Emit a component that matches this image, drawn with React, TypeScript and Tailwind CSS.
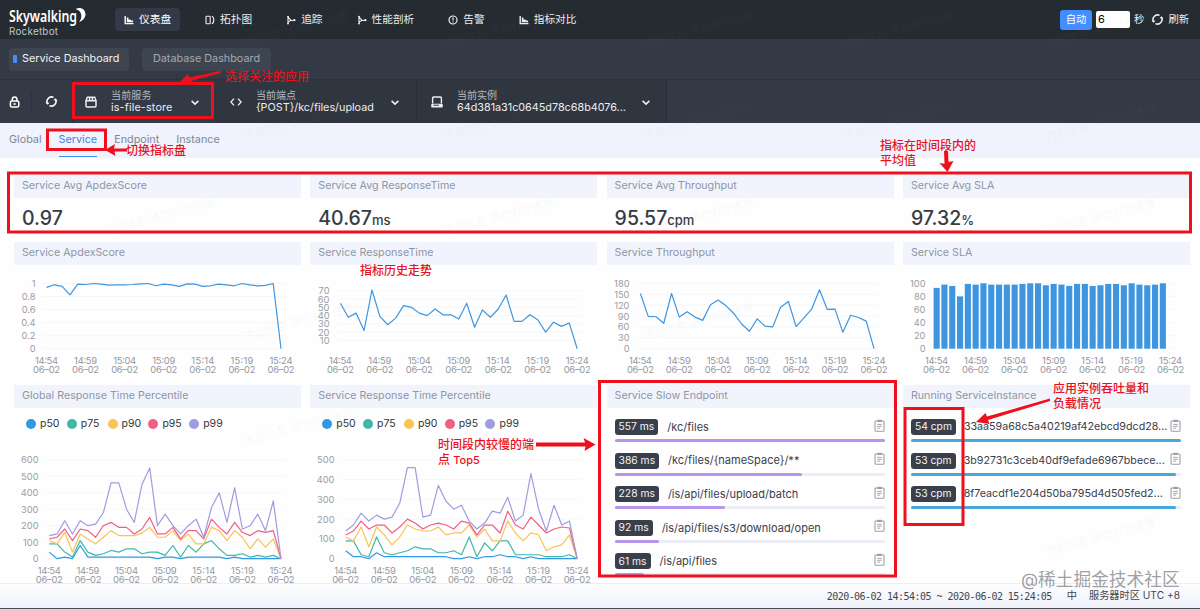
import type { ReactNode } from "react"

type IconProps = { className?: string }

const ChartIcon = ({ className = "h-2.5 w-2.5" }: IconProps) => (
  <svg className={className} viewBox="0 0 10 10" fill="currentColor">
    <path d="M0.5 1h1.4v7H9.5v1.3h-9z" />
    <path d="M2.8 2.6h1.6v1.9h1.8l1 1h1.9v1.8H2.8z" />
  </svg>
)

const TopologyIcon = () => (
  <svg className="h-2.5 w-2.5" viewBox="0 0 10 10" fill="none" stroke="currentColor" strokeWidth="1.1">
    <rect x="1" y="1.2" width="4.2" height="7.6" rx="0.8" />
    <path d="M6.8 1.2c1.3.4 2 1.800 2 3.800s-.7 3.400-2 3.800" />
  </svg>
)

const TraceIcon = () => (
  <svg className="h-2.5 w-2.5" viewBox="0 0 10 10" fill="none" stroke="currentColor" strokeWidth="1.1">
    <path d="M2 1.6v7M2 7.6C2.4 5.6 5 5.3 8.4 5.2M2.2 2.4 5 5.1" />
    <circle cx="8.4" cy="5.2" r="0.6" fill="currentColor" />
    <circle cx="2" cy="1.6" r="0.4" fill="currentColor" />
    <circle cx="2" cy="8.6" r="0.4" fill="currentColor" />
  </svg>
)

const AlarmIcon = () => (
  <svg className="h-2.5 w-2.5" viewBox="0 0 10 10" fill="none" stroke="currentColor" strokeWidth="1.2">
    <circle cx="5" cy="5" r="4" />
    <path d="M5 2.6v3M5 6.4v1" />
  </svg>
)

const ReloadIcon = ({ className = "h-3 w-3" }: IconProps) => (
  <svg className={className} viewBox="0 0 14 14" fill="none" stroke="currentColor" strokeWidth="1.7">
    <path d="M2.9 9.6A4.9 4.9 0 0 1 9.2 2.6M11.1 4.4A4.9 4.9 0 0 1 4.8 11.4" />
    <path d="M.6 8.2 2.8 10.6 4.9 8.3zM13.4 5.8 11.2 3.4 9.1 5.7z" fill="currentColor" stroke="none" />
  </svg>
)

const LockIcon = () => (
  <svg className="h-3 w-3" viewBox="0 0 12 12" fill="none" stroke="currentColor" strokeWidth="1.5">
    <rect x="1.4" y="5" width="8.4" height="6" rx="1.6" />
    <path d="M3.3 5V3.4a2.3 2.3 0 0 1 4.6 0V5M4.400 8h2.400" />
  </svg>
)

const PackageIcon = () => (
  <svg className="h-3 w-3" viewBox="0 0 12 12" fill="none" stroke="currentColor" strokeWidth="1.5">
    <path d="M1 4.8h10v5.1a1 1 0 0 1-1 1H2a1 1 0 0 1-1-1zM1 4.8 2.3 1.2h7.4L11 4.8M4.6 1.2v3.4M7.4 1.2v3.4" />
  </svg>
)

const CodeIcon = () => (
  <svg className="h-3 w-3" viewBox="0 0 12 12" fill="none" stroke="currentColor" strokeWidth="1.3">
    <path d="M4 2.6.9 6 4 9.4M8 2.6 11.1 6 8 9.4" />
  </svg>
)

const DiskIcon = () => (
  <svg className="h-3 w-3" viewBox="0 0 12 12" fill="none" stroke="currentColor" strokeWidth="1.4">
    <path d="M1.6 7.6V2a1 1 0 0 1 1-1h6.8a1 1 0 0 1 1 1v5.600" />
    <rect x="0.2" y="7.8" width="11.6" height="3.7" rx="1.2" fill="currentColor" stroke="none" />
    <path d="M2.500 9.200h5.500" stroke="#303640" strokeWidth="1" />
  </svg>
)

const ChevronIcon = () => (
  <svg className="h-2.5 w-2.5 shrink-0" viewBox="0 0 10 10" fill="none" stroke="currentColor" strokeWidth="1.6">
    <path d="M1.6 3.900 5 7.100 8.400 3.900" />
  </svg>
)

const ClipboardIcon = () => (
  <svg className="h-[13px] w-[11px] shrink-0 text-[#9a9fa8]" viewBox="0 0 11 13" fill="none" stroke="currentColor">
    <rect x="1" y="2" width="9" height="10.2" rx="0.8" strokeWidth="1.1" />
    <path d="M3.2 1.9h4.6" strokeWidth="2.2" />
    <path d="M3.2 5.4h4.6M3.2 7.3h4.6M3.2 9.2h2.8" strokeWidth="0.9" />
  </svg>
)

const Logo = () => (
  <svg className="h-9 w-[84px]" viewBox="0 0 84 36">
    <text
      x="0"
      y="20"
      fontFamily="'Noto Sans'"
      fontWeight="600"
      fontSize="15.500"
      fill="#fff"
      textLength="68"
      lengthAdjust="spacingAndGlyphs"
    >
      Skywalking
    </text>
    <path d="M66.5 7.2C70 4.500 76 6 76.500 12c0 4-3 7-6.500 8 2.500-3 3-6.500 1.500-9.500-1-2-3-3.200-5-3.300z" fill="#fff" />
    <text x="0" y="32.500" fontSize="9.800" fill="#c3c7cc" textLength="49">
      Rocketbot
    </text>
  </svg>
)

const navItems = [
  { label: "仪表盘", icon: <ChartIcon />, active: true },
  { label: "拓扑图", icon: <TopologyIcon /> },
  { label: "追踪", icon: <TraceIcon /> },
  { label: "性能剖析", icon: <TraceIcon /> },
  { label: "告警", icon: <AlarmIcon /> },
  { label: "指标对比", icon: <ChartIcon /> },
]

const Header = () => (
  <header className="flex h-[39px] items-center bg-[#242b31] pl-[9px] pr-[11px] text-[10.700px] text-[#eceef0]">
    <Logo />
    <nav className="ml-[22px] flex gap-4">
      {navItems.map((item) => (
        <div
          key={item.label}
          className={`flex h-[23px] items-center gap-[5px] rounded px-[9px] ${item.active ? "bg-[#333946] text-white" : ""}`}
        >
          {item.icon}
          <span className="pt-0.5">{item.label}</span>
        </div>
      ))}
    </nav>
    <div className="ml-auto flex items-center text-[10.3px]">
      <span className="flex h-5 w-8 items-center justify-center rounded-[3px] bg-[#448dfe] pt-px text-white">自动</span>
      <span className="ml-1 flex h-[17px] w-[34px] items-center rounded-[2px] bg-white pl-0.5 text-[11px] text-black">6</span>
      <span className="ml-1 pt-px">秒</span>
      <ReloadIcon className="ml-[7px] mr-1 h-[13px] w-[13px]" />
      <span className="pt-px">刷新</span>
    </div>
  </header>
)

interface SelectorProps {
  icon: ReactNode
  label: string
  value: string
  className: string
}

const Selector = ({ icon, label, value, className }: SelectorProps) => (
  <div className={`flex h-full items-center text-[#eceef0] ${className}`}>
    {icon}
    <div className="ml-3.5 min-w-0 flex-1">
      <p className="text-[10px] leading-[12px] text-[#b4b8bf]">{label}</p>
      <p className="whitespace-nowrap text-[10.800px] leading-[13px]">{value}</p>
    </div>
    <ChevronIcon />
  </div>
)

const Toolbar = () => (
  <div className="flex h-[44px] items-center border-t border-[#2b313b] bg-[#333a45] text-white">
    <div className="flex h-5 w-8 items-center border-r border-[#2b313b] pl-[9px]">
      <LockIcon />
    </div>
    <div className="flex w-10 items-center pl-[13px]">
      <ReloadIcon className="h-[13px] w-[13px]" />
    </div>
    <Selector
      icon={<PackageIcon />}
      label="当前服务"
      value="is-file-store"
      className="w-[142px] border-l border-[#2b313b] pl-3 pr-[14px] tracking-[0.150px]"
    />
    <Selector icon={<CodeIcon />} label="当前端点" value="{POST}/kc/files/upload" className="w-[203px] border-r border-[#282e37] bg-[#303640] pl-4 pr-4" />
    <Selector
      icon={<DiskIcon />}
      label="当前实例"
      value="64d381a31c0645d78c68b4076..."
      className="w-[250px] border-r border-[#282e37] bg-[#303640] pl-3.5 pr-[15px]"
    />
  </div>
)

interface CardProps {
  title: string
  children: ReactNode
}

const Card = ({ title, children }: CardProps) => (
  <section className="w-[287px]">
    <h2 className="flex h-[23px] items-center bg-[#f2f4fd] pl-2 text-[10.700px] text-[#8e96a5]">{title}</h2>
    {children}
  </section>
)

const averages = [
  { title: "Service Avg ApdexScore", value: "0.97", unit: "" },
  { title: "Service Avg ResponseTime", value: "40.67", unit: "ms" },
  { title: "Service Avg Throughput", value: "95.57", unit: "cpm" },
  { title: "Service Avg SLA", value: "97.32", unit: "%" },
]

const times = ["14:54", "14:59", "15:04", "15:09", "15:14", "15:19", "15:24"]

interface ChartProps {
  height: number
  x0: number
  x1: number
  top: number
  bottom: number
  max: number
  ticks: number[]
  labelX: number
  series?: { color: string; data: number[] }[]
  bars?: number[]
}

const Chart = ({ height, x0, x1, top, bottom, max, ticks, labelX, series = [], bars = [] }: ChartProps) => {
  const step = (x1 - x0) / 30
  const y = (v: number) => bottom - (v / max) * (bottom - top)

  return (
    <svg width="287" height={height} viewBox={`0 0 287 ${height}`} className="block overflow-visible">
      {ticks.map((t) => (
        <g key={t}>
          <line x1={x0 - 4} x2={x1 + 4} y1={y(t)} y2={y(t)} stroke="#f6f7f9" />
          <text x={labelX} y={y(t) + 3.5} textAnchor="end" fontSize="9.300" fill="#9a9da5">
            {t}
          </text>
        </g>
      ))}
      {times.map((t, i) => (
        <g key={t} fontSize="9.4" fill="#94979f" textAnchor="middle">
          <text x={x0 + i * step * 5} y={bottom + 15} textLength="23">
            {t}
          </text>
          <text x={x0 + i * step * 5} y={bottom + 24.5} textLength="27">
            06–02
          </text>
        </g>
      ))}
      {bars.map((v, i) => (
        <rect key={i} x={x0 - 3 + i * step} y={y(v)} width="6.1" height={bottom - y(v)} fill="#3f96e0" />
      ))}
      {series.map((s) => (
        <polyline
          key={s.color}
          points={s.data.map((v, i) => `${x0 + i * step},${y(v)}`).join(" ")}
          fill="none"
          stroke={s.color}
          strokeWidth="1.2"
          strokeLinejoin="round"
        />
      ))}
    </svg>
  )
}

const apdex = [
  0.94, 0.98, 0.955, 0.825, 0.99, 0.985, 1, 0.99, 0.975, 0.98, 0.98, 0.985, 0.995, 1, 0.965, 0.99, 0.98, 0.955, 0.995, 0.99,
  0.955, 0.965, 0.99, 0.98, 0.965, 1, 0.98, 0.965, 0.97, 1, 0,
]
const responseTime = [
  55, 38, 43, 22, 71, 39, 29, 37, 52, 50, 43, 40, 48, 41, 41, 36, 55, 26, 47, 38, 48, 65, 33, 33, 41, 35, 20, 32, 27, 31, 0,
]
const throughput = [
  152, 89, 88, 70, 152, 87, 102, 87, 78, 121, 134, 118, 97, 68, 48, 82, 62, 60, 114, 130, 61, 85, 109, 162, 108, 109, 45, 92,
  86, 76, 0,
]
const sla = [
  93, 98, 96, 80, 99, 98, 100, 98, 98, 98, 98, 99, 100, 100, 97, 99, 98, 96, 99, 99, 96, 97, 99, 99, 97, 100, 98, 97, 98, 100,
]

const percentileColors = [
  { name: "p50", color: "#3398e4" },
  { name: "p75", color: "#3eb8a8" },
  { name: "p90", color: "#f7c455" },
  { name: "p95", color: "#f05f84" },
  { name: "p99", color: "#9f9ce0" },
]

const globalPercentile = [
  [40, 0, 10, 0, 80, 10, 10, 10, 10, 10, 10, 10, 10, 10, 0, 10, 10, 0, 10, 10, 10, 10, 10, 0, 10, 0, 0, 0, 0, 0, 0],
  [90, 90, 40, 10, 110, 40, 20, 30, 50, 40, 60, 60, 30, 40, 40, 20, 80, 10, 80, 40, 90, 110, 60, 20, 20, 30, 10, 20, 10, 20, 0],
  [110, 90, 160, 40, 150, 120, 90, 130, 170, 140, 140, 140, 155, 190, 130, 130, 170, 110, 150, 90, 90, 190, 170, 110, 170, 130, 60, 120, 70, 120, 0],
  [120, 130, 180, 110, 180, 170, 130, 200, 220, 190, 190, 150, 180, 250, 150, 150, 190, 120, 170, 170, 120, 240, 190, 150, 220, 160, 140, 170, 160, 170, 0],
  [140, 150, 230, 150, 230, 200, 210, 280, 460, 460, 300, 220, 450, 550, 200, 270, 200, 150, 200, 240, 130, 310, 400, 220, 430, 180, 200, 270, 170, 350, 0],
]
const servicePercentile = [
  [40, 10, 10, 0, 30, 10, 10, 10, 10, 10, 10, 10, 10, 10, 0, 0, 10, 0, 10, 10, 20, 10, 10, 0, 10, 0, 0, 0, 0, 0, 0],
  [90, 90, 20, 10, 110, 30, 20, 30, 40, 60, 50, 50, 30, 30, 40, 20, 110, 10, 80, 40, 90, 90, 20, 20, 20, 20, 10, 10, 10, 20, 0],
  [110, 90, 160, 60, 160, 120, 70, 110, 170, 150, 140, 140, 160, 120, 130, 130, 170, 110, 150, 90, 90, 190, 130, 90, 130, 120, 40, 60, 70, 120, 0],
  [120, 140, 190, 150, 170, 170, 130, 160, 200, 180, 150, 170, 180, 170, 150, 190, 180, 120, 170, 170, 130, 240, 170, 150, 210, 170, 130, 150, 160, 155, 0],
  [140, 170, 230, 190, 220, 200, 210, 280, 460, 460, 210, 220, 370, 290, 250, 270, 190, 150, 180, 240, 230, 310, 190, 220, 430, 250, 140, 270, 170, 190, 0],
]

const toSeries = (rows: number[][]) => rows.map((data, i) => ({ color: percentileColors[i].color, data }))

const Legend = () => (
  <div className="flex h-[31px] items-center gap-[9px] pl-3 text-[10.500px] text-[#333]">
    {percentileColors.map((p) => (
      <span key={p.name} className="flex w-[31.8px] items-center gap-1">
        <svg className="h-2.5 w-2.5 shrink-0" viewBox="0 0 10 10">
          <circle cx="5" cy="5" r="5" fill={p.color} />
        </svg>
        {p.name}
      </span>
    ))}
  </div>
)

interface RankRow {
  value: string
  name: string
  percent: number
}

const slowEndpoints: RankRow[] = [
  { value: "557 ms", name: "/kc/files", percent: 100 },
  { value: "386 ms", name: "/kc/files/{nameSpace}/**", percent: 69.3 },
  { value: "228 ms", name: "/is/api/files/upload/batch", percent: 41 },
  { value: "92 ms", name: "/is/api/files/s3/download/open", percent: 16.5 },
  { value: "61 ms", name: "/is/api/files", percent: 11 },
]

const instances: RankRow[] = [
  { value: "54 cpm", name: "33aa59a68c5a40219af42ebcd9dcd28...", percent: 100 },
  { value: "53 cpm", name: "3b92731c3ceb40df9efade6967bbece...", percent: 98.2 },
  { value: "53 cpm", name: "8f7eacdf1e204d50ba795d4d505fed2...", percent: 98.2 },
]

const RankList = ({ rows, barClass, textClass }: { rows: RankRow[]; barClass: string; textClass: string }) => (
  <div className="h-[169px] overflow-hidden pl-2 pr-[9px] pt-[11px]">
    {rows.map((row) => (
      <div key={row.name} className="h-[33.6px]">
        <div className="flex h-4 items-center">
          <span className="flex h-4 shrink-0 items-center rounded-[3px] bg-[#3a404b] px-1 text-[10.3px] text-[#f2f3f4]">{row.value}</span>
          <span className={`min-w-0 flex-1 whitespace-nowrap text-[#3a404b] ${textClass}`}>{row.name}</span>
          <span className="-mt-1">
            <ClipboardIcon />
          </span>
        </div>
        <div className="mt-1 h-[3px] rounded-full bg-[#edeef5]">
          <div className={`h-full rounded-full ${barClass}`} style={{ width: `${row.percent}%` }} />
        </div>
      </div>
    ))}
  </div>
)

const Note = ({ className, children }: { className: string; children: ReactNode }) => (
  <p className={`absolute whitespace-nowrap text-[12px] font-medium leading-[15px] text-[#e8121d] ${className}`}>{children}</p>
)

// Red boxes and arrows drawn over the dashboard
const Annotations = () => (
  <div className="pointer-events-none absolute inset-0">
    <svg className="absolute inset-0" width="1200" height="609" fill="none" stroke="#ee111d" strokeWidth="3">
      <rect x="73.5" y="83.5" width="139" height="34" />
      <rect x="47.5" y="130" width="58" height="19.5" />
      <rect x="8.5" y="173" width="1182" height="59" />
      <rect x="599.5" y="381.5" width="296" height="194.5" />
      <rect x="905" y="408.5" width="58" height="116" />
      <g fill="#ee111d" stroke="none">
        <path d="M220 71 189 77.5 188 73.5 179 83 193 84 191 81 221 73z" />
        <path d="M105 150 115 144 114 148.5H127V151.5H114.5L115.5 156z" />
        <path d="M944 151h4l.5 11 5-1-6 11-8-9 5 .8z" />
        <path d="M536 442.5h49l-1.5-4.5 12 6.5-11 6.5 1-4.5H536z" />
        <path d="M1050 398.5 987 416.5 985.5 413 976 422 989.5 424 988 420 1050 401z" />
      </g>
    </svg>
    <Note className="left-[225px] top-[69px]">选择关注的应用</Note>
    <Note className="left-[126px] top-[143px]">切换指标盘</Note>
    <Note className="left-[880px] top-[138px]">
      指标在时间段内的
      <br />
      平均值
    </Note>
    <Note className="left-[360px] top-[263px]">指标历史走势</Note>
    <Note className="left-[438px] top-[437px]">
      时间段内较慢的端
      <br />点 <span className="text-[11px]">Top5</span>
    </Note>
    <Note className="left-[1053px] top-[381px]">
      应用实例吞吐量和
      <br />
      负载情况
    </Note>
    <p className="absolute left-[1021px] top-[568px] whitespace-nowrap text-[17.700px] leading-6 text-[#85888d]/80">@稀土掘金技术社区</p>
  </div>
)

const watermarkSpots = [
  [240, 48],
  [445, 48],
  [645, 48],
  [845, 48],
  [1047, 48],
  [245, 140],
  [445, 140],
  [645, 140],
  [845, 140],
  [1047, 140],
  [105, 235],
  [445, 235],
  [645, 235],
  [1047, 235],
  [245, 340],
  [645, 340],
  [1047, 340],
  [245, 445],
  [1047, 555],
]

const Watermarks = () => (
  <svg className="pointer-events-none absolute inset-0" width="1200" height="609" fill="#8a8f94" fillOpacity="0.07" fontSize="11">
    {watermarkSpots.map(([x, y]) => (
      <text key={`${x}-${y}`} transform={`translate(${x} ${y}) rotate(-15)`}>
        内部信息 请勿对外传播
      </text>
    ))}
  </svg>
)

export default function App() {
  return (
    <div className="relative flex h-[609px] w-[1200px] flex-col overflow-hidden bg-[#fefefe] font-['Inter','Noto_Sans_CJK_SC',sans-serif]">
      <Header />
      <div className="flex h-10 items-center gap-[13px] bg-[#333a45] pl-[9px] text-[10.800px]">
        <div className="flex h-[23px] w-[120px] items-center rounded bg-[#3e4550] pl-1 text-[#f1f2f3]">
          <i className="mr-[5px] h-2 w-1 rounded-[1px] bg-[#448dfe]" />
          Service Dashboard
        </div>
        <div className="flex h-[23px] w-[129px] items-center rounded bg-[#3e4550] pl-[11px] text-[#a4a9b1]">Database Dashboard</div>
      </div>
      <Toolbar />
      <div className="flex h-[35px] gap-[17px] bg-[#f0f3fd] pl-[9px] text-[10.800px] text-[#82868e]">
        {["Global", "Service", "Endpoint", "Instance"].map((tab) => (
          <span
            key={tab}
            className={`flex h-[34px] items-center border-b-[1.5px] pt-px ${tab === "Service" ? "border-[#448dfe] text-[#3f83ea]" : "border-transparent"}`}
          >
            {tab}
          </span>
        ))}
      </div>

      <main className="flex-1 pl-3.5 pt-[17px]">
        <div className="flex h-[67px] gap-[9.3px]">
          {averages.map((item) => (
            <Card key={item.title} title={item.title}>
              <p className="pl-2 pt-1.5 text-[19.500px] font-medium leading-7 text-[#363b45]">
                {item.value}
                <span className="text-[13px]">{item.unit}</span>
              </p>
            </Card>
          ))}
        </div>

        <div className="flex h-[143px] gap-[9.3px]">
          <Card title="Service ApdexScore">
            <Chart height={111} x0={32.5} x1={267} top={18.5} bottom={83.7} max={1} ticks={[0, 0.2, 0.4, 0.6, 0.8, 1]} labelX={21.5} series={[{ color: "#3f96e0", data: apdex }]} />
          </Card>
          <Card title="Service ResponseTime">
            <Chart height={111} x0={30.4} x1={267.2} top={25.8} bottom={83.7} max={70} ticks={[10, 20, 30, 40, 50, 60, 70]} labelX={19.5} series={[{ color: "#3f96e0", data: responseTime }]} />
          </Card>
          <Card title="Service Throughput">
            <Chart height={111} x0={33.4} x1={267} top={18.3} bottom={83.7} max={180} ticks={[0, 30, 60, 90, 120, 150, 180]} labelX={22.5} series={[{ color: "#3f96e0", data: throughput }]} />
          </Card>
          <Card title="Service SLA">
            <Chart height={111} x0={33.6} x1={267.6} top={18.3} bottom={83.7} max={100} ticks={[0, 20, 40, 60, 80, 100]} labelX={22.5} bars={sla} />
          </Card>
        </div>

        <div className="flex h-[198px] gap-[9.3px]">
          <Card title="Global Response Time Percentile">
            <Legend />
            <Chart height={138} x0={35.3} x1={267} top={20.7} bottom={119.7} max={600} ticks={[0, 100, 200, 300, 400, 500, 600]} labelX={24.5} series={toSeries(globalPercentile)} />
          </Card>
          <Card title="Service Response Time Percentile">
            <Legend />
            <Chart height={138} x0={35.7} x1={267.2} top={20.7} bottom={119.7} max={500} ticks={[0, 100, 200, 300, 400, 500]} labelX={24.5} series={toSeries(servicePercentile)} />
          </Card>
          <Card title="Service Slow Endpoint">
            <RankList rows={slowEndpoints} barClass="bg-[#b795ec]" textClass="ml-[9px] text-[11px]" />
          </Card>
          <Card title="Running ServiceInstance">
            <RankList rows={instances} barClass="bg-[#46a9d9]" textClass="ml-2 text-[10.700px]" />
          </Card>
        </div>
      </main>

      <footer className="flex h-[26px] items-center justify-end border-b border-t border-b-[#45505c] border-t-[#eceef3] bg-gradient-to-b from-[#fdfdfe] to-[#eff2fa] pr-5 text-[10.200px] text-[#41464f]">
        <span className="font-['DejaVu_Sans_Mono',monospace] text-[10px] tracking-[-0.53px]">2020-06-02 14:54:05 ~ 2020-06-02 15:24:05</span>
        <span className="ml-[15px]">中</span>
        <span className="ml-3">服务器时区 UTC +8</span>
      </footer>
      <Watermarks />
      <Annotations />
    </div>
  )
}
